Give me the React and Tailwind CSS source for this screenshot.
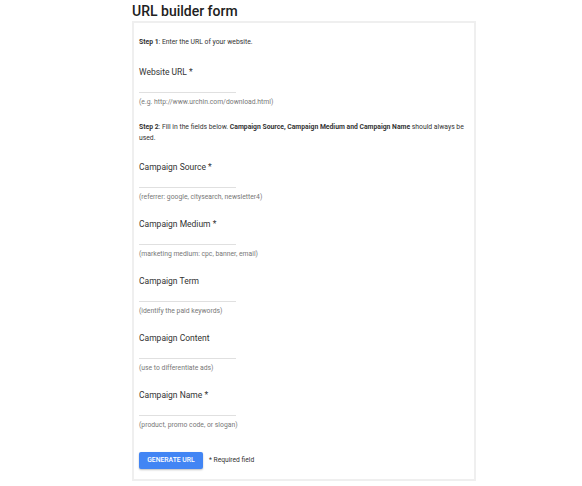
import React from 'react';

const fields = [
  { label: 'Website URL *', hint: '(e.g. http://www.urchin.com/download.html)' },
];

const campaignFields = [
  { label: 'Campaign Source *', hint: '(referrer: google, citysearch, newsletter4)' },
  { label: 'Campaign Medium *', hint: '(marketing medium: cpc, banner, email)' },
  { label: 'Campaign Term', hint: '(identify the paid keywords)' },
  { label: 'Campaign Content', hint: '(use to differentiate ads)' },
  { label: 'Campaign Name *', hint: '(product, promo code, or slogan)' },
];

const Field = ({ label, hint, className = '' }) => (
  <div className={className}>
    <div className="h-[12px] text-[8.5px] leading-[12px] text-[#333333]">{label}</div>
    <input
      type="text"
      className="block h-[15px] w-[97px] border-b border-[#e0e0e0] bg-transparent outline-none"
    />
    <div className="mt-[4px] h-[10px] text-[6.8px] leading-[10px] text-[#777777]">{hint}</div>
  </div>
);

export default function App() {
  return (
    <div className="w-[582px] h-[486px] bg-white font-['Roboto',sans-serif]">
      <div className="ml-[132px] w-[344px]">
        <h1 className="h-[21px] pt-[1px] text-[14px] leading-[20px] font-medium text-[#212121]">
          URL builder form
        </h1>
        <div className="border-2 border-[#efefef] pt-[14px] pb-[10px] px-[5px]">
          <p className="text-[6.8px] leading-[11px] text-[#333333]">
            <span className="font-bold">Step 1</span>: Enter the URL of your website.
          </p>
          {fields.map((f) => (
            <Field key={f.label} {...f} className="mt-[18px]" />
          ))}
          <p className="mt-[15px] text-[6.8px] leading-[11px] text-[#333333] pr-[4px]">
            <span className="font-bold">Step 2</span>: Fill in the fields below.{' '}
            <span className="font-bold">Campaign Source, Campaign Medium and Campaign Name</span> should always be used.
          </p>
          <div className="mt-[17px] flex flex-col gap-[16px]">
            {campaignFields.map((f) => (
              <Field key={f.label} {...f} />
            ))}
          </div>
          <div className="mt-[22px] flex items-center gap-[6px]">
            <button className="h-[17px] w-[64px] rounded-[2px] bg-[#4285f4] text-[6.8px] font-medium text-white shadow-[0_1px_2px_rgba(0,0,0,0.25)]">
              GENERATE URL
            </button>
            <span className="text-[6.7px] text-[#333333]">* Required field</span>
          </div>
        </div>
      </div>
    </div>
  );
}
